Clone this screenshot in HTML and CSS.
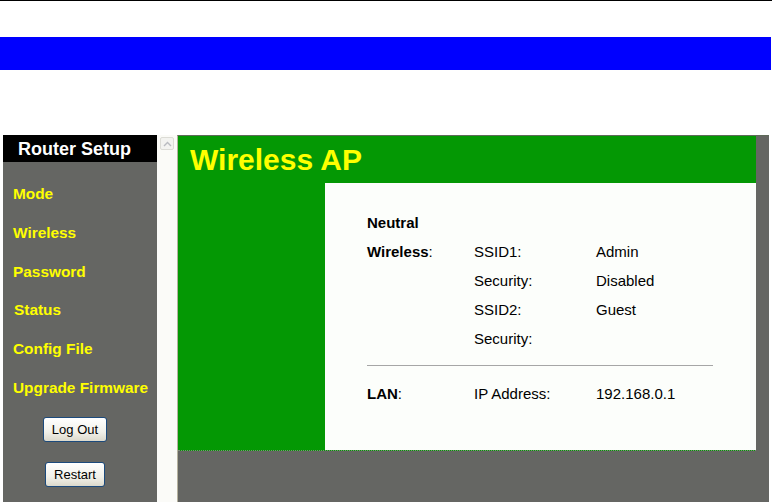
FILE: index.html
```html
<!DOCTYPE html>
<html>
<head>
<meta charset="utf-8">
<title>Router Setup - Wireless AP</title>
<link rel="stylesheet" href="styles.css">
</head>
<body>
<div class="topline"></div>
<div class="bluebar"></div>
<div class="frames">
  <aside class="sidebar">
    <div class="side-head">Router Setup</div>
    <nav class="nav">
      <a class="nav-item">Mode</a>
      <a class="nav-item">Wireless</a>
      <a class="nav-item">Password</a>
      <a class="nav-item nav-status">Status</a>
      <a class="nav-item">Config File</a>
      <a class="nav-item">Upgrade Firmware</a>
    </nav>
    <div class="buttons">
      <button class="btn btn-logout">Log Out</button>
      <button class="btn btn-restart">Restart</button>
    </div>
  </aside>
  <div class="scroll">
    <span class="scroll-btn">
      <svg width="9" height="6" viewBox="0 0 9 6"><path d="M1 5 L4.5 1.5 L8 5" fill="none" stroke="#b9bbc0" stroke-width="1.4"/></svg>
    </span>
  </div>
  <main class="main">
    <section class="panel">
      <h1 class="panel-title">Wireless AP</h1>
      <div class="panel-body">
        <div class="panel-left"></div>
        <div class="panel-content">
          <div class="grid">
            <div class="c1 b">Neutral</div><div></div><div></div>
            <div class="c1"><b>Wireless</b>:</div><div>SSID1:</div><div>Admin</div>
            <div></div><div>Security:</div><div>Disabled</div>
            <div></div><div>SSID2:</div><div>Guest</div>
            <div></div><div>Security:</div><div></div>
          </div>
          <div class="rule"></div>
          <div class="grid">
            <div class="c1"><b>LAN</b>:</div><div>IP Address:</div><div>192.168.0.1</div>
          </div>
        </div>
      </div>
    </section>
  </main>
</div>
</body>
</html>
```

FILE: styles.css
```css
html, body {
  margin: 0;
  padding: 0;
  background: #ffffff;
  font-family: "Liberation Sans", Arial, sans-serif;
  overflow: hidden;
}

.topline {
  height: 1px;
  background: #000000;
}

.bluebar {
  margin-top: 36px;
  width: 771px;
  height: 33px;
  background: #0000ff;
}

.frames {
  margin-top: 65px;
  margin-left: 3px;
  width: 766px;
  height: 367px;
  display: flex;
  overflow: hidden;
}

.sidebar {
  width: 154px;
  flex: none;
  background: #656663;
  display: flex;
  flex-direction: column;
}

.side-head {
  height: 27px;
  line-height: 29px;
  background: #000000;
  color: #ffffff;
  font-weight: bold;
  font-size: 18px;
  padding-left: 15px;
  overflow: hidden;
}

.nav {
  padding-top: 13px;
  display: flex;
  flex-direction: column;
}

.nav-item {
  height: 38.8px;
  line-height: 38.8px;
  padding-left: 10px;
  color: #ffff00;
  font-weight: bold;
  font-size: 15.4px;
  white-space: nowrap;
}

.nav-status {
  padding-left: 11px;
}

.buttons {
  margin-top: 9px;
  padding-right: 10px;
  display: flex;
  flex-direction: column;
  align-items: center;
  gap: 20px;
}

.btn {
  height: 25px;
  padding: 0;
  border: 1px solid #1c4a7c;
  border-radius: 3px;
  background: linear-gradient(#ffffff, #f2f1ea 60%, #dcd9cc);
  font-family: "Liberation Sans", Arial, sans-serif;
  font-size: 13px;
  color: #000000;
}

.btn-logout { width: 64px; }
.btn-restart { width: 60px; }

.scroll {
  width: 20px;
  flex: none;
  background: #fbfbf8;
  padding-top: 2px;
  box-sizing: border-box;
}

.scroll-btn {
  display: flex;
  align-items: center;
  justify-content: center;
  margin-left: 3px;
  width: 14px;
  height: 13px;
  background: #f3f3f0;
  border: 1px solid #dcdcd6;
  border-radius: 2px;
  box-sizing: border-box;
}

.main {
  flex: 1;
  background: #656663;
  border-left: 1px solid #b6b29f;
  border-top: 1px solid #5f6a5a;
}

.panel {
  width: 578px;
  background: #049804;
  border-bottom: 1px dotted #7d8a7a;
}

.panel-title {
  margin: 0;
  height: 47px;
  line-height: 48px;
  padding-left: 12px;
  color: #ffff00;
  font-size: 30px;
  font-weight: bold;
  overflow: hidden;
}

.panel-body {
  display: flex;
  height: 267px;
}

.panel-left {
  width: 147px;
  flex: none;
}

.panel-content {
  flex: 1;
  background: #fcfefb;
  padding: 25px 0 0 42px;
  color: #000000;
  font-size: 15px;
}

.grid {
  display: grid;
  grid-template-columns: 107px 122px 1fr;
  grid-auto-rows: 29px;
  align-items: center;
}

.b { font-weight: bold; }

.rule {
  width: 346px;
  height: 1px;
  background: #a6a6a6;
  margin: 12px 0 13px 0;
}
```
